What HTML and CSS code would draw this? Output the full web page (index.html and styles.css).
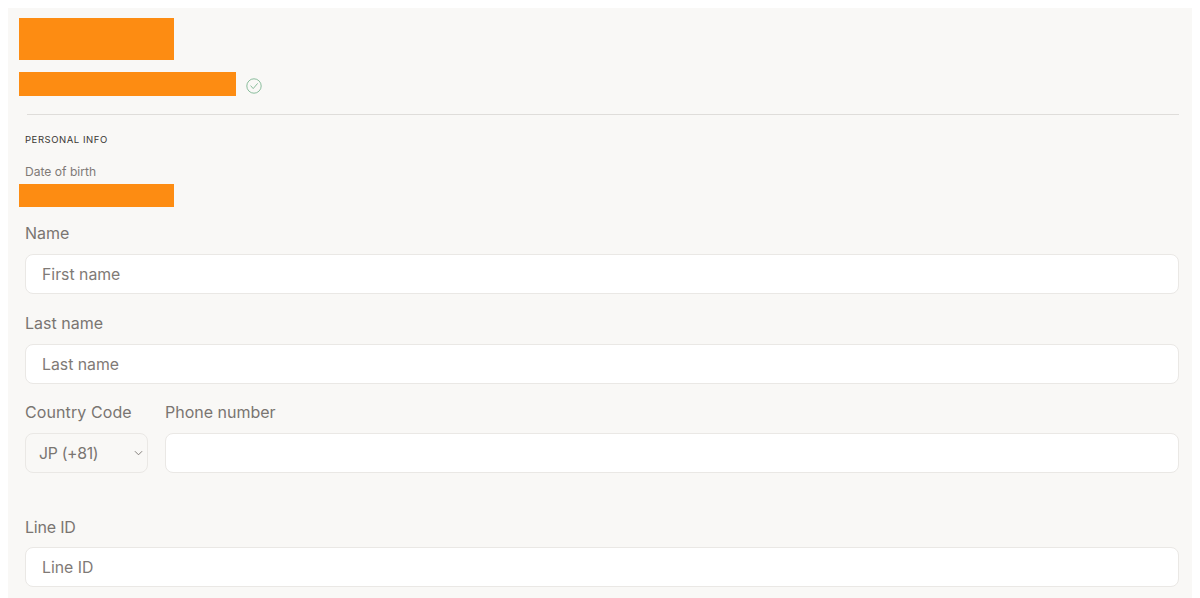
FILE: index.html
```html
<!DOCTYPE html>
<html lang="en">
<head>
<meta charset="utf-8">
<title>Personal info</title>
<link rel="stylesheet" href="styles.css">
</head>
<body>
<main class="panel">
  <div class="redact redact-name"></div>
  <div class="email-row">
    <div class="redact redact-email"></div>
    <svg class="check" viewBox="0 0 16 16" width="16" height="16" aria-hidden="true">
      <circle cx="8" cy="8" r="7.2" fill="none" stroke="#7fb793" stroke-width="0.9"/>
      <path d="M4.6 7.6 7.2 10.6 11.6 5.4" fill="none" stroke="#7fb793" stroke-width="0.9"/>
    </svg>
  </div>
  <div class="content">
    <hr class="rule">
    <h2 class="section">PERSONAL INFO</h2>
    <div class="small-label">Date of birth</div>
  </div>
  <div class="redact redact-dob"></div>
  <form class="content form">
    <div class="field field-name">
      <label class="label">Name</label>
      <div class="input placeholder">First name</div>
    </div>
    <div class="field field-last">
      <label class="label">Last name</label>
      <div class="input placeholder">Last name</div>
    </div>
    <div class="phone-row">
      <div class="field country">
        <label class="label">Country Code</label>
        <div class="input select">
          <span>JP (+81)</span>
          <svg class="chevron" viewBox="0 0 10 6" width="9" height="6" aria-hidden="true">
            <path d="M1 1 5 5 9 1" fill="none" stroke="#77726d" stroke-width="1"/>
          </svg>
        </div>
      </div>
      <div class="field phone">
        <label class="label">Phone number</label>
        <div class="input"></div>
      </div>
    </div>
    <div class="field field-line">
      <label class="label label-line">Line ID</label>
      <div class="input placeholder">Line ID</div>
    </div>
  </form>
</main>
</body>
</html>
```
FILE: styles.css
```css
* { box-sizing: border-box; }
html, body { margin: 0; height: 100%; background: #fff; overflow: hidden; }
body { padding: 8px 8px 0; font-family: "Inter", "Liberation Sans", sans-serif; color: #7a7571; }
.panel { height: 590px; background: #f9f8f6; padding: 10px 13px 0 11px; }
.redact { background: #fd8c12; }
.redact-name { width: 155px; height: 42px; }
.email-row { display: flex; align-items: center; gap: 10px; margin-top: 12px; height: 24px; }
.redact-email { width: 217px; height: 24px; }
.check { margin-top: 3px; }
.content { margin-left: 6px; }
.rule { border: 0; border-top: 1px solid #dfddda; margin: 18px 0 0 2px; }
.section { margin: 19px 0 0; font-size: 9.5px; line-height: 12px; font-weight: 400; letter-spacing: 0.55px; color: #3a3734; }
.small-label { margin-top: 19px; font-size: 12.1px; line-height: 14px; color: #7f7a76; }
.redact-dob { width: 155px; height: 23px; margin-top: 5px; }
.form { display: flex; flex-direction: column; }
.field { display: flex; flex-direction: column; }
.label { font-size: 16px; line-height: 18px; color: #7a7571; height: 20px; }
.label-line { line-height: 20px; letter-spacing: -0.2px; }
.input { height: 40px; margin-top: 10px; background: #fff; border: 1px solid #eae8e5; border-radius: 8px; padding: 0 16px; display: flex; align-items: center; font-size: 15.8px; color: #7f7a76; }
.field-name { margin-top: 17px; }
.field-last { margin-top: 20px; }
.phone-row { display: flex; gap: 17px; margin-top: 19px; }
.country { width: 123px; flex: none; }
.country .label { white-space: nowrap; letter-spacing: 0.1px; }
.phone { flex: 1; }
.select { background: #f9f8f6; justify-content: space-between; padding: 0 4px 0 13px; letter-spacing: -0.3px; color: #7a7571; }
.field-line { margin-top: 44px; }
```
